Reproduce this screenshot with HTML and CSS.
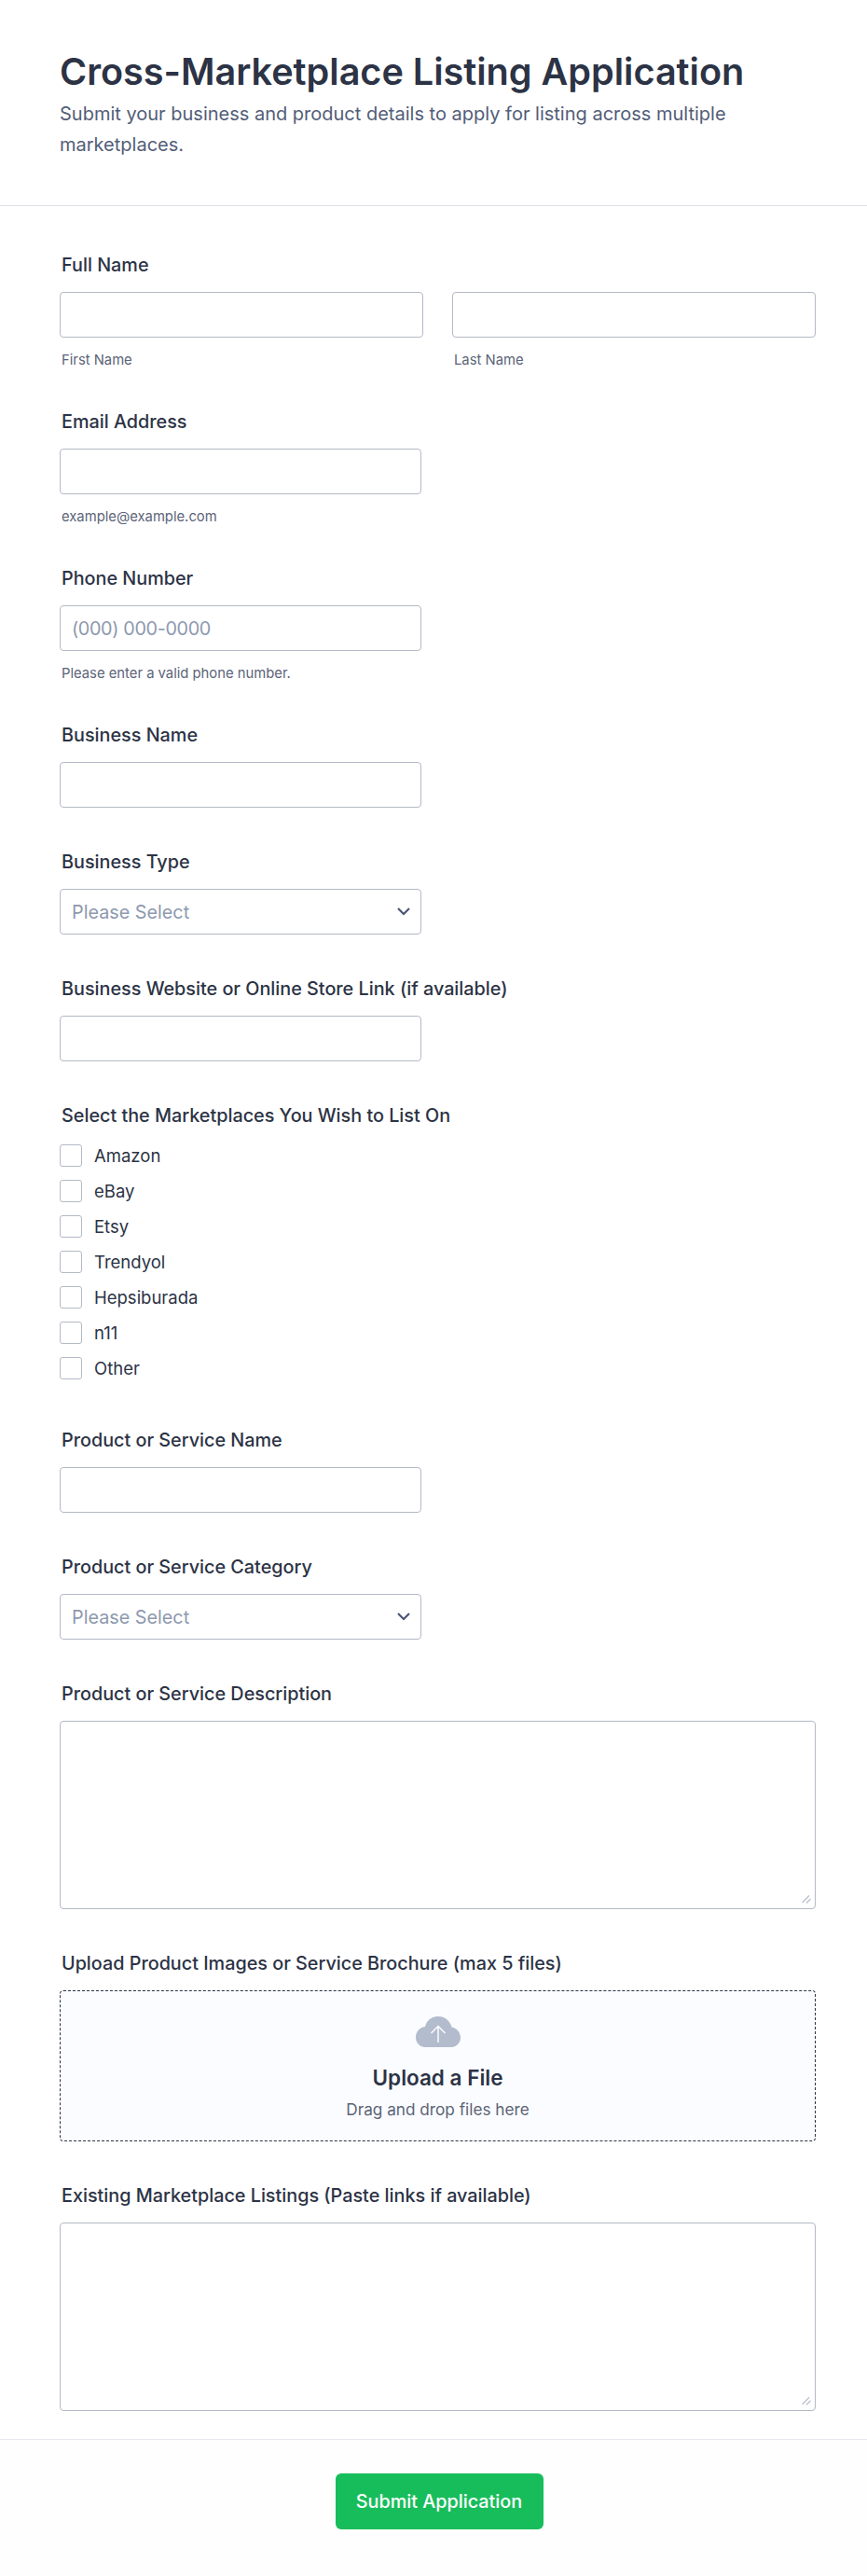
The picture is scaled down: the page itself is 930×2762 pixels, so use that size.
FILE: index.html
```html
<!DOCTYPE html>
<html lang="en">
<head>
<meta charset="utf-8">
<title>Cross-Marketplace Listing Application</title>
<link rel="stylesheet" href="styles.css">
</head>
<body>
<form class="form">
  <header class="header">
    <h1 class="title">Cross-Marketplace Listing Application</h1>
    <p class="subtitle">Submit your business and product details to apply for listing across multiple marketplaces.</p>
  </header>
  <main class="fields">
    <div class="field field-sub">
      <label class="label">Full Name</label>
      <div class="name-grid">
        <div><input class="input input-full" type="text"><div class="sub">First Name</div></div>
        <div><input class="input input-full" type="text"><div class="sub">Last Name</div></div>
      </div>
    </div>
    <div class="field field-sub">
      <label class="label">Email Address</label>
      <input class="input" type="email">
      <div class="sub">example@example.com</div>
    </div>
    <div class="field field-sub">
      <label class="label">Phone Number</label>
      <input class="input input-phone" type="tel" placeholder="(000) 000-0000">
      <div class="sub">Please enter a valid phone number.</div>
    </div>
    <div class="field">
      <label class="label">Business Name</label>
      <input class="input" type="text">
    </div>
    <div class="field">
      <label class="label">Business Type</label>
      <div class="select-wrap">
        <select class="select"><option>Please Select</option></select>
        <svg class="chevron" viewBox="0 0 14 10" aria-hidden="true"><path d="M1 2 7 8 13 2" /></svg>
      </div>
    </div>
    <div class="field">
      <label class="label">Business Website or Online Store Link (if available)</label>
      <input class="input" type="url">
    </div>
    <div class="field field-checks">
      <label class="label label-check">Select the Marketplaces You Wish to List On</label>
      <div class="checks">
        <label class="check"><input class="box" type="checkbox">Amazon</label>
        <label class="check"><input class="box" type="checkbox">eBay</label>
        <label class="check"><input class="box" type="checkbox">Etsy</label>
        <label class="check"><input class="box" type="checkbox">Trendyol</label>
        <label class="check"><input class="box" type="checkbox">Hepsiburada</label>
        <label class="check"><input class="box" type="checkbox">n11</label>
        <label class="check"><input class="box" type="checkbox">Other</label>
      </div>
    </div>
    <div class="field">
      <label class="label">Product or Service Name</label>
      <input class="input" type="text">
    </div>
    <div class="field">
      <label class="label">Product or Service Category</label>
      <div class="select-wrap">
        <select class="select"><option>Please Select</option></select>
        <svg class="chevron" viewBox="0 0 14 10" aria-hidden="true"><path d="M1 2 7 8 13 2" /></svg>
      </div>
    </div>
    <div class="field">
      <label class="label">Product or Service Description</label>
      <div class="area-wrap">
        <textarea class="area"></textarea>
        <svg class="grip" viewBox="0 0 10 10" aria-hidden="true"><path d="M0.500 9 8 1.500M5 9.500 9.500 5"/></svg>
      </div>
    </div>
    <div class="field">
      <label class="label">Upload Product Images or Service Brochure (max 5 files)</label>
      <div class="upload">
        <svg class="cloud" viewBox="0 0 48 33" aria-hidden="true">
          <path class="cloud-body" d="M24 0C17 0 11.500 4.600 10 11 4 11.800 0 16.600 0 22.500 0 28.500 4.500 33 10 33H38C43.500 33 48 28.500 48 22.800 48 17.400 44 12.500 38.500 11.500 37 4.800 31 0 24 0Z"/>
          <path class="cloud-arrow" d="M24 28V11M16.500 18 24 10.500 31.500 18"/>
        </svg>
        <div class="upload-title">Upload a File</div>
        <div class="upload-hint">Drag and drop files here</div>
      </div>
    </div>
    <div class="field field-last">
      <label class="label">Existing Marketplace Listings (Paste links if available)</label>
      <div class="area-wrap">
        <textarea class="area"></textarea>
        <svg class="grip" viewBox="0 0 10 10" aria-hidden="true"><path d="M0.500 9 8 1.500M5 9.500 9.500 5"/></svg>
      </div>
    </div>
  </main>
  <footer class="footer">
    <button class="submit" type="button">Submit Application</button>
  </footer>
</form>
</body>
</html>
```

FILE: styles.css
```css
* { box-sizing: border-box; }
html, body { margin: 0; padding: 0; background: #fff; }
body { font-family: Inter, "Liberation Sans", sans-serif; color: #2c3345; }
.form { width: 930px; height: 2762px; display: flex; flex-direction: column; }

.header { height: 221px; padding: 53px 55px 0 64px; border-bottom: 1px solid #dcdfe6; }
.title { margin: 0; font-size: 39.600px; line-height: 48px; font-weight: 600; color: #2c3345; }
.subtitle { margin: 5px 0 0; font-size: 20px; line-height: 33px; font-weight: 400; color: #525d78; }

.fields { padding: 51px 55px 0 64px; }
.field { margin-bottom: 46px; }
.field-checks { margin-bottom: 53px; }
.field-sub { margin-bottom: 46px; }
.field-last { margin-bottom: 0; }
.label { display: block; margin: 0 0 17px 2px; font-size: 19.800px; line-height: 24px; font-weight: 500; color: #2c3345; }
.label-check { margin-bottom: 19px; }

.name-grid { display: grid; grid-template-columns: 390px 390px; column-gap: 31px; }
.input, .select { display: block; width: 388px; height: 49px; padding: 0 12px; border: 1px solid #b4b9c6; border-radius: 4px; background: #fff; font: 400 19.800px Inter, sans-serif; color: #2c3345; outline: none; }
.input-full { width: 100%; }
.input::placeholder { color: #8d99ae; opacity: 1; }
.input-phone::placeholder { letter-spacing: -0.350px; }
.sub { margin: 16px 0 0 2px; font-size: 14.800px; line-height: 16px; color: #5c6478; }

.select-wrap { position: relative; width: 388px; }
.select { appearance: none; color: #8d99ae; }
.chevron { position: absolute; top: 19px; right: 12px; width: 14px; height: 10px; }
.chevron path { fill: none; stroke: #4b5578; stroke-width: 2.200; }

.checks { display: flex; flex-direction: column; row-gap: 14px; }
.check { display: flex; align-items: center; height: 24px; font-size: 18.500px; color: #2c3345; }
.box { appearance: none; width: 24px; height: 24px; margin: 0 13px 0 0; border: 1px solid #b4b9c6; border-radius: 3px; background: #fff; }

.area-wrap { position: relative; }
.area { display: block; width: 100%; height: 202px; padding: 8px 12px; border: 1px solid #b4b9c6; border-radius: 4px; background: #fff; font: 400 18px Inter, sans-serif; outline: none; resize: none; }
.grip { position: absolute; right: 5px; bottom: 6px; width: 10px; height: 10px; }
.grip path { fill: none; stroke: #b8bdc9; stroke-width: 1.200; }

.upload { display: flex; flex-direction: column; align-items: center; height: 162px; padding-top: 27px; border: 1px dashed #2c3345; border-radius: 4px; background: #fbfcff; }
.cloud { width: 48px; height: 33px; }
.cloud-body { fill: #b3bccd; }
.cloud-arrow { fill: none; stroke: #fbfcff; stroke-width: 1.500; }
.upload-title { margin-top: 19px; font-size: 22.500px; line-height: 28px; font-weight: 600; color: #2c3345; }
.upload-hint { margin-top: 8px; font-size: 17.200px; line-height: 24px; color: #5c6478; }

.footer { flex: 1; display: flex; justify-content: center; align-items: flex-start; margin-top: 30px; padding: 36px 0 0 12px; border-top: 1px solid #e6e9f0; background: #fefefe; }
.submit { width: 223px; height: 60px; border: 0; border-radius: 6px; background: #18bd5b; color: #fff; font: 500 19.800px Inter, sans-serif; }
```
